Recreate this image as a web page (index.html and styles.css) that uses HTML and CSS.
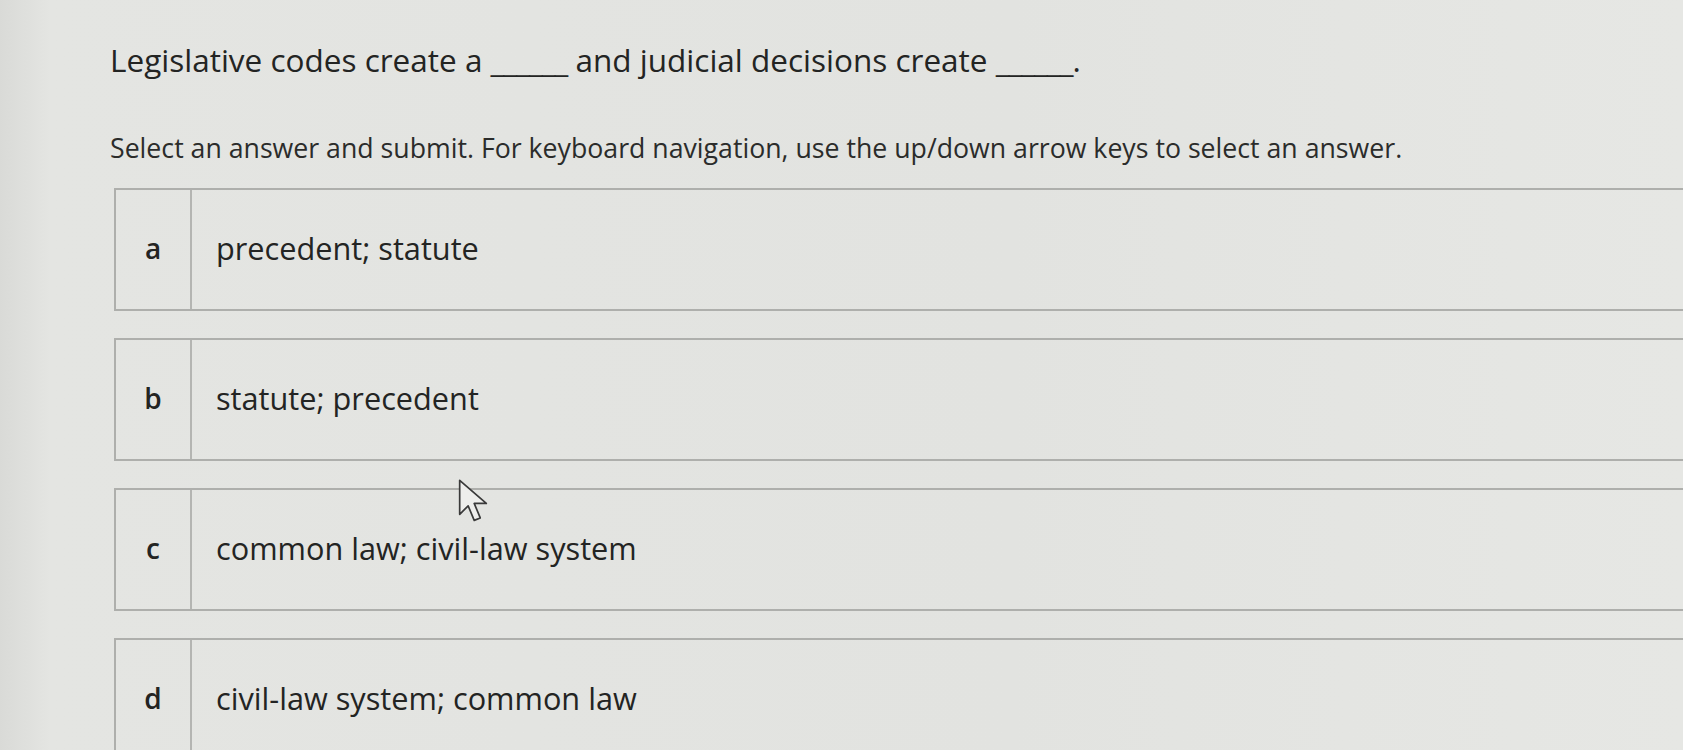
FILE: index.html
```html
<!DOCTYPE html>
<html lang="en">
<head>
    <meta charset="UTF-8">
    <meta name="viewport" content="width=device-width, initial-scale=1.0">
    <title>Question</title>
    <link rel="stylesheet" href="styles.css">
</head>
<body>
    <div class="question">
        <p class="prompt">Legislative codes create a <span class="blank">______</span> and judicial decisions create <span class="blank">______</span>.</p>
        <p class="hint">Select an answer and submit. For keyboard navigation, use the up/down arrow keys to select an answer.</p>

        <div class="choices">
            <div class="choice">
                <span class="letter">a</span>
                <span class="answer">precedent; statute</span>
            </div>
            <div class="choice">
                <span class="letter">b</span>
                <span class="answer">statute; precedent</span>
            </div>
            <div class="choice">
                <span class="letter">c</span>
                <span class="answer">common law; civil-law system</span>
            </div>
            <div class="choice">
                <span class="letter">d</span>
                <span class="answer">civil-law system; common law</span>
            </div>
        </div>
    </div>

    <!-- mouse pointer -->
    <svg class="pointer" width="32" height="46" viewBox="0 0 26 38">
        <path d="M2 2 L2 30 L9 23 L14 35 L19 33 L14 21 L24 21 Z" fill="#eeeeec" stroke="#3a3a3a" stroke-width="1.4" stroke-linejoin="round"/>
    </svg>
</body>
</html>
```

FILE: styles.css
```css
body {
    margin: 0;
    height: 100vh;
    overflow: hidden;
    font-family: "Open Sans", "Noto Sans", sans-serif;
    color: #232423;
    background: linear-gradient(90deg, #d9dad7 0, #e4e5e2 50px, #e2e3e0 60%, #e6e7e4 100%);
}
.question {
    padding: 38px 0 0 110px;
}
.prompt {
    margin: 0;
    font-size: 31.5px;
    line-height: 44px;
}
.blank {
    letter-spacing: -1px;
}
.hint {
    margin: 48px 0 0 0;
    font-size: 26.7px;
    line-height: 36px;
    color: #2b2c2b;
}
.choices {
    display: flex;
    flex-direction: column;
    gap: 27px;
    margin: 22px -40px 0 4px;
}
.choice {
    display: flex;
    height: 119px;
    border: 2px solid #aeafac;
    border-right: none;
}
.letter {
    width: 76px;
    flex-shrink: 0;
    display: flex;
    align-items: center;
    justify-content: center;
    border-right: 2px solid #b4b5b2;
    font-size: 28px;
    font-weight: 600;
    padding-bottom: 4px;
    box-sizing: border-box;
}
.answer {
    display: flex;
    align-items: center;
    padding: 0 0 4px 24px;
    font-size: 30.7px;
}
.pointer {
    position: absolute;
    left: 457px;
    top: 478px;
}
```
